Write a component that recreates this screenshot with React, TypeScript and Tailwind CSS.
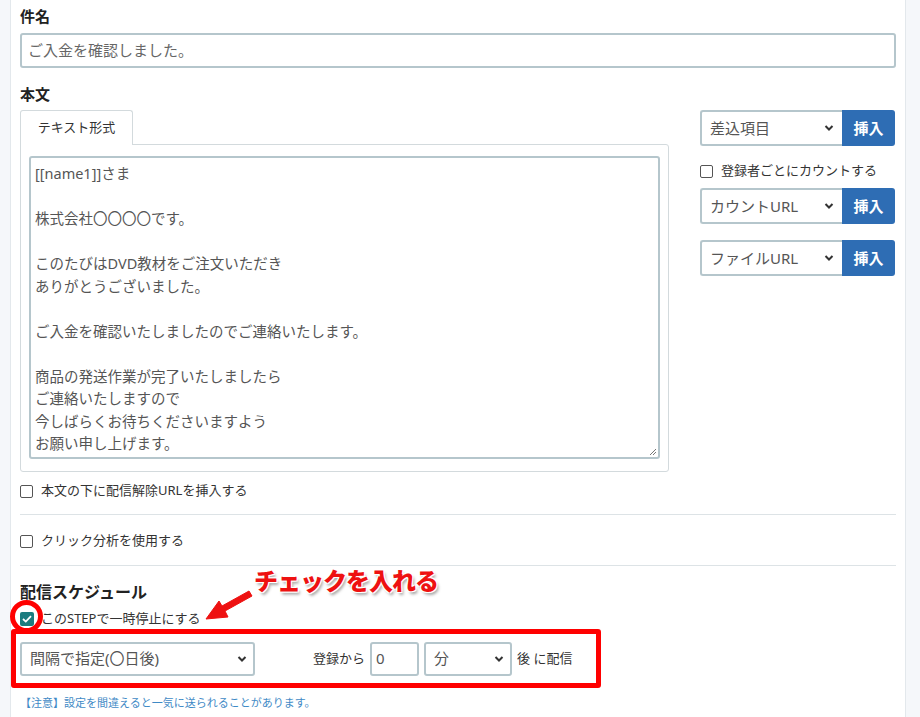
import React from 'react';

const font = { fontFamily: '"Noto Sans", "Noto Sans CJK JP", sans-serif' };

function Chevron() {
  return (
    <svg className="pointer-events-none absolute right-[8px] top-1/2 -translate-y-1/2" width="10" height="7" viewBox="0 0 10 7">
      <path d="M1.5 1.5 L5 5 L8.5 1.5" fill="none" stroke="#333" strokeWidth="2" />
    </svg>
  );
}

function Select({ label, className }: { label: string; className: string }) {
  return (
    <div className={`relative ${className}`}>
      <div className="h-full w-full border-2 border-[#b5c6cc] rounded-[3px] bg-white flex items-center pl-[8px] text-[15px] text-[#555]">
        {label}
      </div>
      <Chevron />
    </div>
  );
}

function InsertRow({ label }: { label: string }) {
  return (
    <div className="flex h-[36px]">
      <div className="relative flex-1">
        <div className="h-full border-2 border-r-0 border-[#b5c6cc] rounded-l-[3px] bg-white flex items-center pl-[8px] text-[15px] text-[#555]">
          {label}
        </div>
        <Chevron />
      </div>
      <button className="w-[53px] bg-[#2e6db4] text-white font-bold text-[15px] rounded-r-[3px]">挿入</button>
    </div>
  );
}

function Check({ label, checked = false }: { label: string; checked?: boolean }) {
  return (
    <label className="flex items-center h-[18px] text-[13px] text-[#333]">
      {checked ? (
        <span className="w-[14px] h-[14px] rounded-[2px] bg-[#1b7c7f] flex items-center justify-center mr-[7px]">
          <svg width="10" height="8" viewBox="0 0 10 8">
            <path d="M1 4 L3.8 6.6 L9 1.2" fill="none" stroke="white" strokeWidth="1.8" />
          </svg>
        </span>
      ) : (
        <span className="w-[13px] h-[13px] rounded-[2px] border border-[#555] bg-white mr-[8px]" />
      )}
      {label}
    </label>
  );
}

const body = [
  '[[name1]]さま',
  '',
  '株式会社〇〇〇〇です。',
  '',
  'このたびはDVD教材をご注文いただき',
  'ありがとうございました。',
  '',
  'ご入金を確認いたしましたのでご連絡いたします。',
  '',
  '商品の発送作業が完了いたしましたら',
  'ご連絡いたしますので',
  '今しばらくお待ちくださいますよう',
  'お願い申し上げます。',
];

export default function App() {
  return (
    <div className="relative w-[920px] h-[717px] overflow-hidden bg-[#f5f7fa]" style={font}>
      <div className="ml-[10px] w-[896px] h-full bg-white border-l border-r border-[#e3e8ec] pl-[9px] pr-[9px] pt-[5px]">
        <div className="h-[22px] leading-[22px] text-[15px] font-bold text-[#222]">件名</div>
        <div className="mt-[6px] h-[35px] border-2 border-[#b5c6cc] rounded-[3px] flex items-center pl-[6px] text-[15px] text-[#666]">
          ご入金を確認しました。
        </div>
        <div className="mt-[15px] h-[22px] leading-[22px] text-[15px] font-bold text-[#222]">本文</div>

        <div className="mt-[5px] flex gap-[31px]">
          <div className="w-[649px]">
            <div className="flex">
              <div className="w-[113px] h-[35px] border border-b-0 border-[#d3dadd] rounded-t-[3px] flex items-center justify-center text-[13px] text-[#333] bg-white relative z-10 -mb-px">
                テキスト形式
              </div>
            </div>
            <div className="border border-[#d3dadd] rounded-b-[3px] rounded-tr-[3px] pt-[11px] pb-[12px] pl-[8px] pr-[8px]">
              <div className="relative h-[303px] border-2 border-[#b5c6cc] rounded-[3px] pl-[4px] pt-[4px] text-[14.5px] leading-[22.5px] text-[#555]">
                {body.map((l, i) => (
                  <div key={i} className="h-[22.5px]">{l}</div>
                ))}
                <svg className="absolute right-[1px] bottom-[1px]" width="9" height="9" viewBox="0 0 9 9">
                  <path d="M8 2 L2 8 M8 5 L5 8" stroke="#777" strokeWidth="1" />
                </svg>
              </div>
            </div>
          </div>

          <div className="w-[195px]">
            <InsertRow label="差込項目" />
            <div className="mt-[16px]">
              <Check label="登録者ごとにカウントする" />
            </div>
            <div className="mt-[8px]">
              <InsertRow label="カウントURL" />
            </div>
            <div className="mt-[16px]">
              <InsertRow label="ファイルURL" />
            </div>
          </div>
        </div>

        <div className="mt-[10px]">
          <Check label="本文の下に配信解除URLを挿入する" />
        </div>
        <div className="mt-[14px] border-t border-[#dde3e6]" />
        <div className="mt-[17px]">
          <Check label="クリック分析を使用する" />
        </div>
        <div className="mt-[15px] border-t border-[#dde3e6]" />

        <div className="mt-[15px] h-[22px] leading-[22px] text-[16px] font-bold text-[#222]">配信スケジュール</div>
        <div className="mt-[7px]">
          <Check label="このSTEPで一時停止にする" checked />
        </div>

        <div className="mt-[1px] -ml-[9px] w-[590px] h-[59px] border-[5px] border-[#ff0000] rounded-[3px] flex items-center pl-[4px]">
          <Select label="間隔で指定(〇日後)" className="w-[235px] h-[34px]" />
          <span className="ml-[58px] text-[13px] text-[#333]">登録から</span>
          <div className="ml-[5px] w-[49px] h-[34px] border-2 border-[#b5c6cc] rounded-[3px] flex items-center pl-[4px] text-[15px] text-[#555]">0</div>
          <Select label="分" className="ml-[5px] w-[88px] h-[34px]" />
          <span className="ml-[5px] text-[13px] text-[#333]">後 に配信</span>
        </div>

        <div className="mt-[7px] text-[11px] leading-[16px] text-[#3f8ac6]">【注意】設定を間違えると一気に送られることがあります。</div>
      </div>

      {/* annotations */}
      <div className="absolute left-[10px] top-[600px] w-[33px] h-[33px] rounded-full border-[5px] border-[#ff0000]" />
      <svg className="absolute left-0 top-0" width="920" height="717" viewBox="0 0 920 717" style={{ pointerEvents: 'none' }}>
        <path d="M249 591 L222 606 L219 601 L206 619 L228 617 L225 611 L252 596 Z" fill="#ee1111" stroke="#ee1111" strokeWidth="1" strokeLinejoin="round" />
      </svg>
      <div
        className="absolute left-[254px] top-[563px] text-[24px] font-black text-[#ee1111] tracking-[-1px] [text-shadow:1px_1px_0_#fff,-1px_-1px_0_#fff,1px_-1px_0_#fff,-1px_1px_0_#fff,2px_3px_3px_rgba(0,0,0,0.35)]"
        style={font}
      >
        チェックを入れる
      </div>
    </div>
  );
}
